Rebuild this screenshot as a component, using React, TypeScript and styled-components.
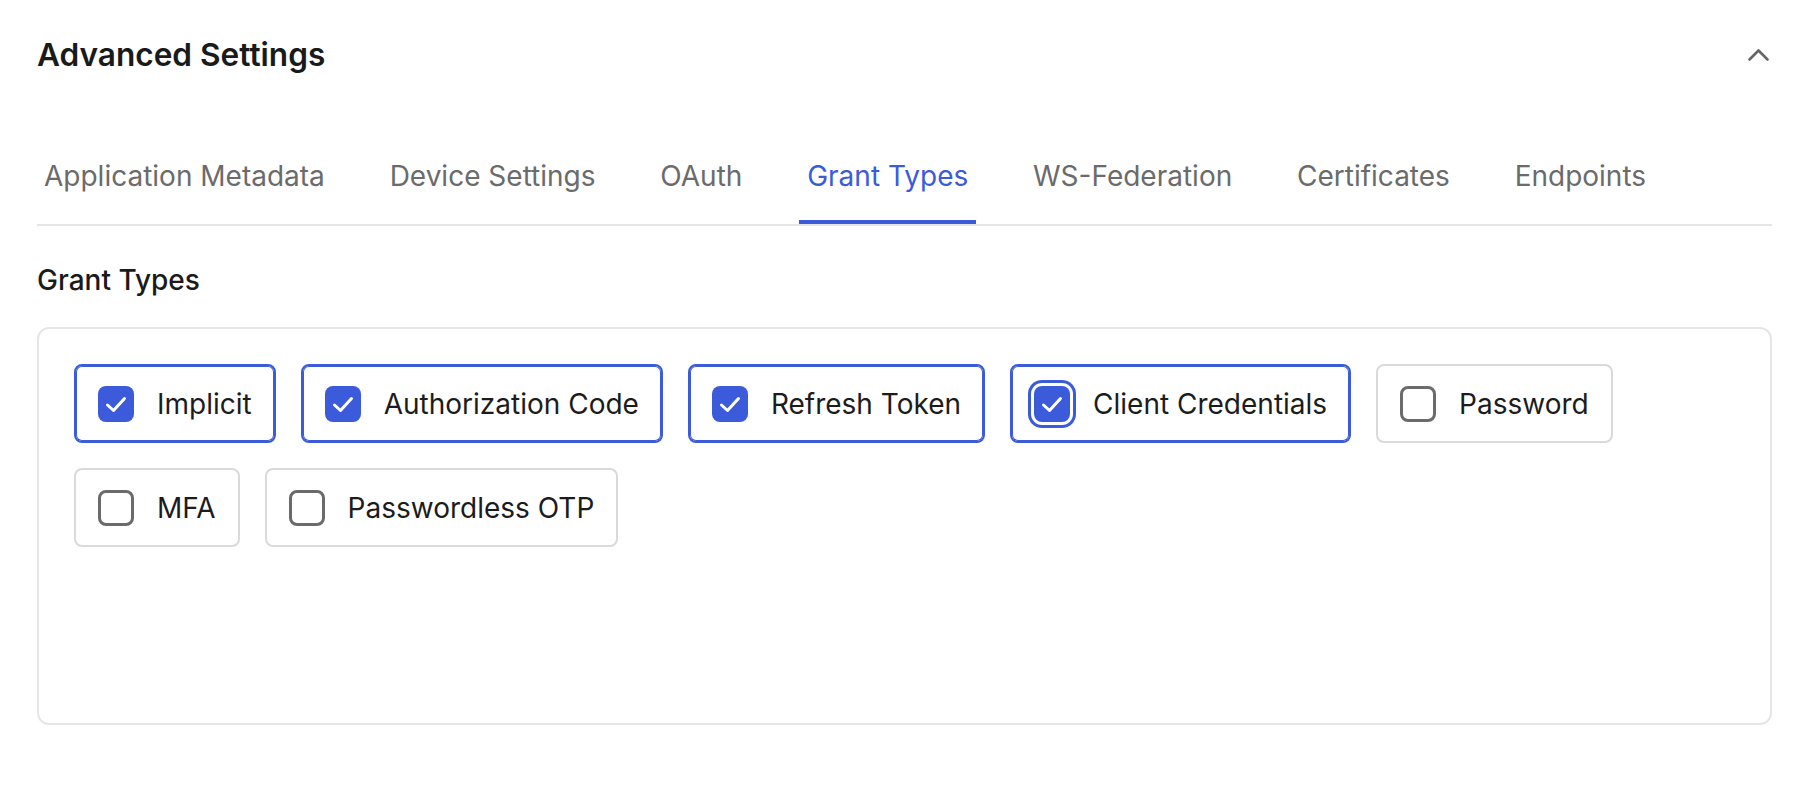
import React, { useState } from "react";
import styled, { createGlobalStyle } from "styled-components";

const blue = "#3b5bdb";

const GlobalStyle = createGlobalStyle`
  body {
    margin: 0;
    background: #ffffff;
    font-family: Inter, "Noto Sans", "Liberation Sans", sans-serif;
    color: #1c1c1c;
  }
`;

const tabs = [
  "Application Metadata",
  "Device Settings",
  "OAuth",
  "Grant Types",
  "WS-Federation",
  "Certificates",
  "Endpoints",
];

const grantTypes = [
  { id: "implicit", label: "Implicit", checked: true },
  { id: "authorization_code", label: "Authorization Code", checked: true },
  { id: "refresh_token", label: "Refresh Token", checked: true },
  { id: "client_credentials", label: "Client Credentials", checked: true, focused: true },
  { id: "password", label: "Password", checked: false },
  { id: "mfa", label: "MFA", checked: false },
  { id: "passwordless_otp", label: "Passwordless OTP", checked: false },
];

const App: React.FC = () => {
  const [active, setActive] = useState("Grant Types");
  const [values, setValues] = useState(grantTypes);

  const toggle = (id: string) =>
    setValues((prev) =>
      prev.map((item) => (item.id === id ? { ...item, checked: !item.checked } : item))
    );

  return (
    <>
      <GlobalStyle />
      <Page>
        <Header>
          <Title>Advanced Settings</Title>
          <Collapse aria-label="Collapse">
            <svg width="36" height="36" viewBox="0 0 36 36" fill="none">
              <polyline
                points="9.5 22.5 18.5 13.5 27.5 22.5"
                stroke="#666666"
                strokeWidth="2.6"
                strokeLinecap="round"
                strokeLinejoin="round"
              />
            </svg>
          </Collapse>
        </Header>

        <TabList>
          {tabs.map((tab) => (
            <Tab key={tab} active={tab === active} onClick={() => setActive(tab)}>
              {tab}
            </Tab>
          ))}
        </TabList>

        <SectionLabel>Grant Types</SectionLabel>

        <Card>
          <ChipGrid>
            {values.map((item) => (
              <Chip key={item.id} selected={item.checked} onClick={() => toggle(item.id)}>
                <Box checked={item.checked} focused={!!item.focused}>
                  {item.checked && (
                    <svg width="36" height="36" viewBox="0 0 36 36" fill="none">
                      <polyline
                        points="9.5 19 15.5 24.5 26.5 12.5"
                        stroke="#ffffff"
                        strokeWidth="3"
                        strokeLinecap="round"
                        strokeLinejoin="round"
                      />
                    </svg>
                  )}
                </Box>
                <ChipLabel>{item.label}</ChipLabel>
              </Chip>
            ))}
          </ChipGrid>
        </Card>
      </Page>
    </>
  );
};

const Page = styled.div`
  margin: 0 40px 0 37px;
  display: flex;
  flex-direction: column;
`;

const Header = styled.div`
  height: 110px;
  display: flex;
  align-items: center;
  justify-content: space-between;
`;

const Title = styled.h2`
  margin: 0;
  font-size: 31.6px;
  font-weight: 600;
  line-height: 1.21;
  color: #1a1a1a;
`;

const Collapse = styled.button`
  display: flex;
  align-items: center;
  justify-content: center;
  padding: 0;
  margin-right: -4px;
  border: none;
  background: none;
  cursor: pointer;
`;

const TabList = styled.div`
  margin-top: 49px;
  display: flex;
  gap: 48.8px;
  border-bottom: 2px solid #e6e6e6;
`;

const Tab = styled.button<{ active: boolean }>`
  padding: 0 8px 27px;
  border: none;
  border-bottom: 4px solid ${({ active }) => (active ? blue : "transparent")};
  background: none;
  font-family: inherit;
  font-size: 28px;
  line-height: 34px;
  font-weight: 400;
  color: ${({ active }) => (active ? blue : "#6b6b6b")};
  cursor: pointer;

  &:first-child {
    margin-left: -1px;
  }
`;

const SectionLabel = styled.div`
  margin: 37px 0 30px;
  font-size: 28px;
  line-height: 34px;
  font-weight: 500;
  color: #1a1a1a;
`;

const Card = styled.div`
  box-sizing: border-box;
  height: 398px;
  padding: 35px;
  border: 2px solid #e6e6e6;
  border-radius: 12px;
`;

const ChipGrid = styled.div`
  display: flex;
  flex-wrap: wrap;
  gap: 25px 25px;
`;

const Chip = styled.label<{ selected: boolean }>`
  box-sizing: border-box;
  height: 79px;
  display: flex;
  align-items: center;
  gap: 23px;
  padding: 0 22px;
  border: 2px solid ${({ selected }) => (selected ? blue : "#dadada")};
  box-shadow: ${({ selected }) => (selected ? `inset 0 0 0 1px ${blue}` : "none")};
  border-radius: 8px;
  cursor: pointer;
`;

const Box = styled.span<{ checked: boolean; focused: boolean }>`
  box-sizing: border-box;
  width: 36px;
  height: 36px;
  flex-shrink: 0;
  display: flex;
  border-radius: 8px;
  background: ${({ checked }) => (checked ? blue : "#ffffff")};
  border: ${({ checked }) => (checked ? "none" : "3.5px solid #6b6b6b")};
  box-shadow: ${({ focused }) =>
    focused ? `0 0 0 3px #ffffff, 0 0 0 6px ${blue}` : "none"};
`;

const ChipLabel = styled.span`
  font-size: 28px;
  line-height: 34px;
  color: #1c1c1c;
  white-space: nowrap;
`;

export default App;
